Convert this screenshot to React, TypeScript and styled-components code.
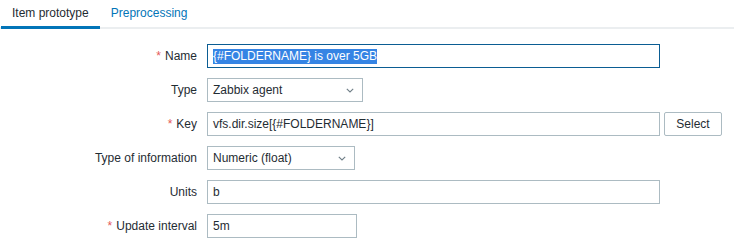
import styled, { createGlobalStyle } from "styled-components";

const GlobalStyle = createGlobalStyle`
  body {
    margin: 0;
    background: #ffffff;
    font-family: "Liberation Sans", Arial, sans-serif;
    font-size: 12px;
    color: #1f2c33;
  }
`;

const Page = styled.div`
  width: 734px;
  height: 243px;
  overflow: hidden;
`;

const TabBar = styled.div`
  display: flex;
  height: 27px;
  border-bottom: 2px solid #ebeef0;
  padding-left: 1px;
`;

const Tab = styled.div<{ $active?: boolean }>`
  padding: 6px 11px 0;
  box-sizing: border-box;
  height: 29px;
  margin-bottom: -2px;
  font-size: 12px;
  line-height: 15px;
  color: ${(p) => (p.$active ? "#1f2c33" : "#0275b8")};
  border-bottom: 3px solid ${(p) => (p.$active ? "#0275b8" : "transparent")};
`;

const Form = styled.div`
  display: grid;
  grid-template-columns: 197px 1fr;
  column-gap: 10px;
  row-gap: 10px;
  padding-top: 15px;
`;

const Label = styled.div`
  display: flex;
  align-items: center;
  justify-content: flex-end;
  height: 24px;
  white-space: nowrap;
`;

const Asterisk = styled.span`
  color: #e45959;
  margin-right: 4px;
`;

const Field = styled.div`
  display: flex;
  align-items: center;
  gap: 4px;
  height: 24px;
`;

const TextBox = styled.div<{ $width: number; $focused?: boolean }>`
  box-sizing: border-box;
  width: ${(p) => p.$width}px;
  height: 24px;
  border: 1px solid ${(p) => (p.$focused ? "#0b5d93" : "#acbbc2")};
  padding: 0 5px;
  display: flex;
  align-items: center;
  white-space: nowrap;
  overflow: hidden;
`;

const Selected = styled.span`
  background: #3584e4;
  color: #ffffff;
  line-height: 15px;
`;

const SelectBox = styled.div<{ $width: number }>`
  box-sizing: border-box;
  width: ${(p) => p.$width}px;
  height: 24px;
  border: 1px solid #acbbc2;
  padding: 0 8px 0 5px;
  display: flex;
  align-items: center;
  justify-content: space-between;
`;

const Chevron = styled.svg`
  width: 8px;
  height: 5px;
`;

const Button = styled.div`
  box-sizing: border-box;
  width: 58px;
  height: 24px;
  border: 1px solid #acbbc2;
  border-radius: 2px;
  display: flex;
  align-items: center;
  justify-content: center;
  color: #1f2c33;
`;

const Arrow = () => (
  <Chevron viewBox="0 0 8 5">
    <path d="M0.8 0.8l3.2 3.2 3.2-3.2" fill="none" stroke="#6f7e87" strokeWidth="1.1" />
  </Chevron>
);

const FieldLabel = ({ text, required }: { text: string; required?: boolean }) => (
  <Label>
    {required && <Asterisk>*</Asterisk>}
    {text}
  </Label>
);

export default function App() {
  return (
    <Page>
      <GlobalStyle />
      <TabBar>
        <Tab $active>Item prototype</Tab>
        <Tab>Preprocessing</Tab>
      </TabBar>
      <Form>
        <FieldLabel text="Name" required />
        <Field>
          <TextBox $width={453} $focused>
            <Selected>{"{#FOLDERNAME} is over 5GB"}</Selected>
          </TextBox>
        </Field>

        <FieldLabel text="Type" />
        <Field>
          <SelectBox $width={156}>
            Zabbix agent
            <Arrow />
          </SelectBox>
        </Field>

        <FieldLabel text="Key" required />
        <Field>
          <TextBox $width={453}>{"vfs.dir.size[{#FOLDERNAME}]"}</TextBox>
          <Button>Select</Button>
        </Field>

        <FieldLabel text="Type of information" />
        <Field>
          <SelectBox $width={148}>
            Numeric (float)
            <Arrow />
          </SelectBox>
        </Field>

        <FieldLabel text="Units" />
        <Field>
          <TextBox $width={453}>b</TextBox>
        </Field>

        <FieldLabel text="Update interval" required />
        <Field>
          <TextBox $width={150}>5m</TextBox>
        </Field>
      </Form>
    </Page>
  );
}
